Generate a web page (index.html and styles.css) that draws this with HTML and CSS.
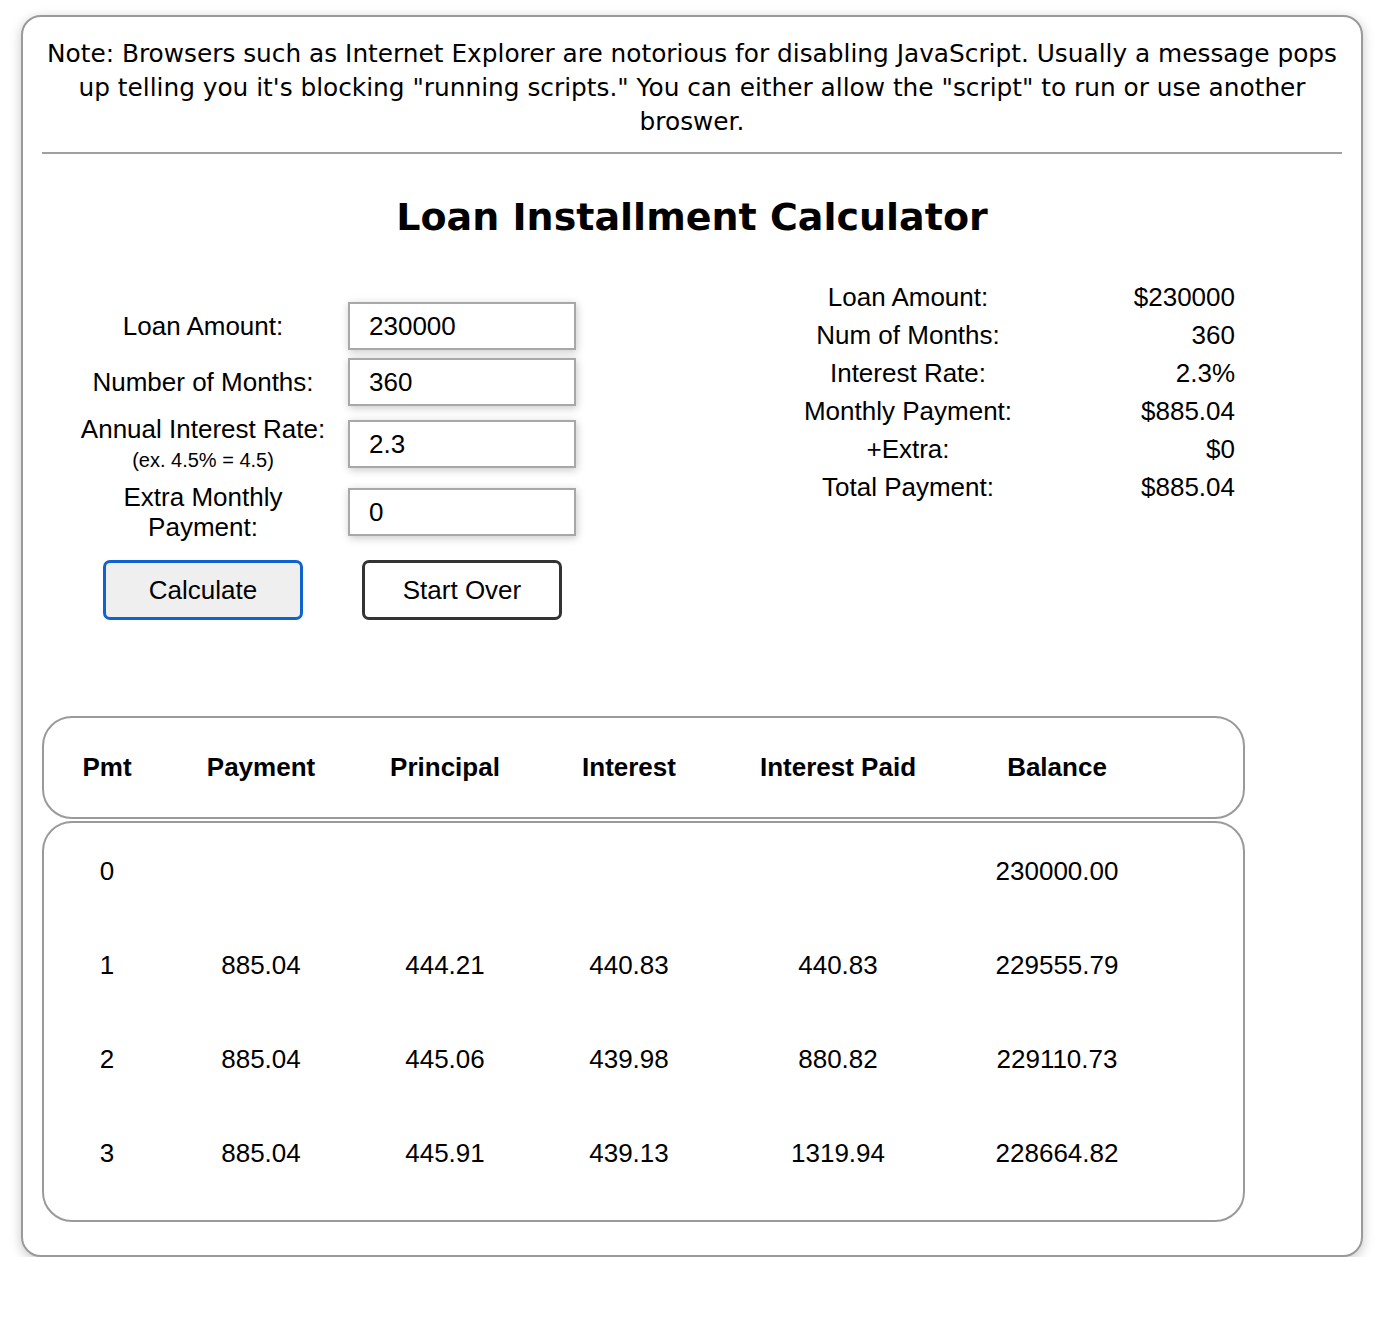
FILE: index.html
```html
<!DOCTYPE html>
<html>
<head>
<meta charset="utf-8">
<title>Loan Installment Calculator</title>
<link rel="stylesheet" href="styles.css">
</head>
<body>
<div class="card">
  <p class="note">Note: Browsers such as Internet Explorer are notorious for disabling JavaScript. Usually a message pops up telling you it's blocking "running scripts." You can either allow the "script" to run or use another broswer.</p>
  <hr class="rule">
  <h1 class="title">Loan Installment Calculator</h1>

  <div class="calc">
    <form class="form">
      <label class="lbl" for="amt">Loan Amount:</label>
      <input class="field" id="amt" type="text" value="230000">

      <label class="lbl" for="months">Number of Months:</label>
      <input class="field" id="months" type="text" value="360">

      <label class="lbl" for="rate">Annual Interest Rate:<span class="hint">(ex. 4.5% = 4.5)</span></label>
      <input class="field" id="rate" type="text" value="2.3">

      <label class="lbl" for="extra">Extra Monthly<br>Payment:</label>
      <input class="field" id="extra" type="text" value="0">

      <button type="button" class="btn btn-primary">Calculate</button>
      <button type="button" class="btn btn-plain">Start Over</button>
    </form>

    <div class="summary">
      <div class="s-lbl">Loan Amount:</div><div class="s-val">$230000</div>
      <div class="s-lbl">Num of Months:</div><div class="s-val">360</div>
      <div class="s-lbl">Interest Rate:</div><div class="s-val">2.3%</div>
      <div class="s-lbl">Monthly Payment:</div><div class="s-val">$885.04</div>
      <div class="s-lbl">+Extra:</div><div class="s-val">$0</div>
      <div class="s-lbl">Total Payment:</div><div class="s-val">$885.04</div>
    </div>
  </div>

  <div class="tbox thead">
    <div class="trow">
      <div class="cell">Pmt</div>
      <div class="cell">Payment</div>
      <div class="cell">Principal</div>
      <div class="cell">Interest</div>
      <div class="cell">Interest Paid</div>
      <div class="cell">Balance</div>
    </div>
  </div>
  <div class="tbox tbody">
    <div class="trow">
      <div class="cell">0</div><div class="cell"></div><div class="cell"></div><div class="cell"></div><div class="cell"></div><div class="cell">230000.00</div>
    </div>
    <div class="trow">
      <div class="cell">1</div><div class="cell">885.04</div><div class="cell">444.21</div><div class="cell">440.83</div><div class="cell">440.83</div><div class="cell">229555.79</div>
    </div>
    <div class="trow">
      <div class="cell">2</div><div class="cell">885.04</div><div class="cell">445.06</div><div class="cell">439.98</div><div class="cell">880.82</div><div class="cell">229110.73</div>
    </div>
    <div class="trow">
      <div class="cell">3</div><div class="cell">885.04</div><div class="cell">445.91</div><div class="cell">439.13</div><div class="cell">1319.94</div><div class="cell">228664.82</div>
    </div>
  </div>
</div>
</body>
</html>
```

FILE: styles.css
```css
html, body {
  margin: 0;
  padding: 0;
  background: #ffffff;
}

body {
  padding: 15px 0 0 21px;
  font-family: "Liberation Sans", Arial, Helvetica, sans-serif;
  color: #000;
}

.card {
  box-sizing: border-box;
  width: 1342px;
  border: 2px solid #9a9a9a;
  border-radius: 20px;
  padding: 20px 19px 33px;
  box-shadow: 0 3px 12px rgba(0, 0, 0, 0.22);
  background: #fff;
}

.note {
  margin: 0;
  font-family: "DejaVu Sans", Verdana, sans-serif;
  font-size: 24.8px;
  line-height: 34px;
  text-align: center;
}

.rule {
  margin: 13px 0 0;
  border: 0;
  height: 2px;
  background: #a0a0a0;
}

.title {
  margin: 39px 0 0;
  font-family: "DejaVu Sans", Verdana, sans-serif;
  font-weight: bold;
  font-size: 38px;
  line-height: 48px;
  text-align: center;
}

.calc {
  display: flex;
  align-items: flex-start;
  margin-top: 37px;
}

.form {
  margin: 24px 0 0 21px;
  display: grid;
  grid-template-columns: 280px 228px;
  column-gap: 5px;
  row-gap: 8px;
  align-items: center;
}

.lbl {
  font-size: 26px;
  line-height: 30px;
  text-align: center;
}

.hint {
  display: block;
  font-size: 20px;
  line-height: 28px;
  padding-top: 2px;
}

.field {
  box-sizing: border-box;
  width: 228px;
  height: 48px;
  margin: 0;
  border: 2px solid #a8a8a8;
  padding: 0 0 0 19px;
  font-family: "Liberation Sans", Arial, sans-serif;
  font-size: 26px;
  color: #000;
  background: #fff;
  box-shadow: 1px 2px 8px rgba(0, 0, 0, 0.22);
  outline: none;
}

.btn {
  box-sizing: border-box;
  justify-self: center;
  width: 200px;
  height: 60px;
  margin-top: 10px;
  border-radius: 7px;
  font-family: "Liberation Sans", Arial, sans-serif;
  font-size: 26px;
  color: #000;
  padding: 0;
}

.btn-primary {
  border: 3px solid #0f63cf;
  background: #efefef;
}

.btn-plain {
  border: 3px solid #333;
  background: #fff;
}

.summary {
  margin-left: 224px;
  display: grid;
  grid-template-columns: 216px 219px;
  font-size: 26px;
  line-height: 38px;
}

.s-lbl {
  text-align: center;
}

.s-val {
  text-align: right;
}

.tbox {
  box-sizing: border-box;
  width: 1203px;
  border: 2px solid #9a9a9a;
  border-radius: 30px;
}

.thead {
  margin-top: 96px;
  font-weight: bold;
}

.thead .trow {
  height: 99px;
}

.tbody {
  margin-top: 2px;
  padding: 1px 0 20px;
}

.tbody .trow {
  height: 94px;
}

.trow {
  display: grid;
  grid-template-columns: 126px 182px 186px 182px 236px 202px;
  align-items: center;
  font-size: 26px;
}

.cell {
  text-align: center;
}
```
